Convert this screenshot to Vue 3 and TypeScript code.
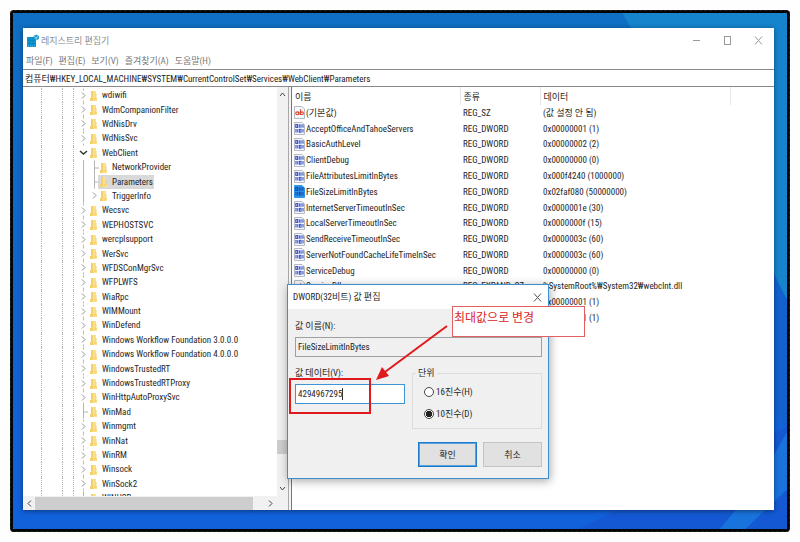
<script setup lang="ts">
import { ref } from 'vue'

interface TreeNode {
  name: string
  child?: boolean
  state: 'closed' | 'open' | 'leaf'
}

interface RegistryValue {
  name: string
  type: string
  data: string
  text?: boolean
}

const closed = (name: string): TreeNode => ({ name, state: 'closed' })

const menus: string[] = ['파일(F)', '편집(E)', '보기(V)', '즐겨찾기(A)', '도움말(H)']
const path = ref('컴퓨터₩HKEY_LOCAL_MACHINE₩SYSTEM₩CurrentControlSet₩Services₩WebClient₩Parameters')

const nodes: TreeNode[] = [
  ...['wdiwifi', 'WdmCompanionFilter', 'WdNisDrv', 'WdNisSvc'].map(closed),
  { name: 'WebClient', state: 'open' },
  { name: 'NetworkProvider', child: true, state: 'leaf' },
  { name: 'Parameters', child: true, state: 'leaf' },
  { name: 'TriggerInfo', child: true, state: 'closed' },
  ...[
    'Wecsvc', 'WEPHOSTSVC', 'wercplsupport', 'WerSvc', 'WFDSConMgrSvc', 'WFPLWFS', 'WiaRpc',
    'WIMMount', 'WinDefend', 'Windows Workflow Foundation 3.0.0.0',
    'Windows Workflow Foundation 4.0.0.0', 'WindowsTrustedRT', 'WindowsTrustedRTProxy',
    'WinHttpAutoProxySvc',
  ].map(closed),
  { name: 'WinMad', state: 'leaf' },
  ...['Winmgmt', 'WinNat', 'WinRM', 'Winsock', 'WinSock2'].map(closed),
  { name: 'WINUSB', state: 'leaf' },
]

const dword = (name: string, data: string): RegistryValue => ({ name, type: 'REG_DWORD', data })

const values: RegistryValue[] = [
  { name: '(기본값)', type: 'REG_SZ', data: '(값 설정 안 됨)', text: true },
  dword('AcceptOfficeAndTahoeServers', '0x00000001 (1)'),
  dword('BasicAuthLevel', '0x00000002 (2)'),
  dword('ClientDebug', '0x00000000 (0)'),
  dword('FileAttributesLimitInBytes', '0x000f4240 (1000000)'),
  dword('FileSizeLimitInBytes', '0x02faf080 (50000000)'),
  dword('InternetServerTimeoutInSec', '0x0000001e (30)'),
  dword('LocalServerTimeoutInSec', '0x0000000f (15)'),
  dword('SendReceiveTimeoutInSec', '0x0000003c (60)'),
  dword('ServerNotFoundCacheLifeTimeInSec', '0x0000003c (60)'),
  dword('ServiceDebug', '0x00000000 (0)'),
  { name: 'ServiceDll', type: 'REG_EXPAND_SZ', data: '%SystemRoot%₩System32₩webclnt.dll', text: true },
  { name: '', type: '', data: '0x00000001 (1)' },
  { name: '', type: '', data: '0x00000001 (1)' },
]

const selectedKey = ref('Parameters')
const selectedValue = ref('FileSizeLimitInBytes')
const valueData = ref('4294967295')
const base = ref('dec')
</script>

<template>
  <main class="desktop">
    <svg class="wallpaper" viewBox="0 0 780 522" preserveAspectRatio="none" aria-hidden="true">
      <defs>
        <linearGradient id="sky" x1="0" y1="0" x2="0" y2="1">
          <stop offset="0" stop-color="#0f6fc3" />
          <stop offset="0.5" stop-color="#1164cc" />
          <stop offset="1" stop-color="#1161dc" />
        </linearGradient>
      </defs>
      <rect width="780" height="522" fill="url(#sky)" />
      <path d="M614 0H780V290L700 130L624 18Z" fill="#1584cd" />
      <path d="M700 160L780 290V420L700 300Z" fill="#1261cf" />
      <path d="M570 522L780 418V522Z" fill="#1459d3" />
      <path d="M712 522L748 480L780 424V482L738 522Z" fill="#1873dc" />
    </svg>

    <section class="window">
      <header class="titlebar">
        <svg class="app-icon" viewBox="0 0 12 14" aria-hidden="true">
          <rect x="0" y="3" width="9" height="10" fill="#0b9ad8" />
          <path d="M0 6.2H9M0 9.6H9M3 3V13M6 3V13" stroke="#087cb4" stroke-width="0.7" />
          <path d="M1 12H8" stroke="#5cc4ec" stroke-width="0.8" stroke-dasharray="1 1" />
          <path d="M6.5 2L9.3 0.5L12 2V5L9.3 6.3L6.5 5Z" fill="#279fd0" />
          <path d="M7.5 2.6L9.3 3.6L11.2 2.6M9.3 3.6V5.6" fill="none" stroke="#c5eaf7" stroke-width="0.7" />
        </svg>
        <h1>레지스트리 편집기</h1>
        <div class="controls">
          <button type="button" aria-label="최소화">
            <svg viewBox="0 0 9 9"><path d="M1 4.5H8" /></svg>
          </button>
          <button type="button" aria-label="최대화">
            <svg viewBox="0 0 9 9"><rect x="1.5" y="0.5" width="6" height="8" /></svg>
          </button>
          <button type="button" aria-label="닫기">
            <svg viewBox="0 0 9 9"><path d="M1 0.5L8 8.5M8 0.5L1 8.5" /></svg>
          </button>
        </div>
      </header>

      <nav class="menubar">
        <button v-for="menu in menus" :key="menu" type="button">{{ menu }}</button>
      </nav>

      <input v-model="path" class="address" type="text" aria-label="주소" spellcheck="false" />

      <div class="panes">
        <div class="tree-pane">
          <div class="tree-view">
            <ul class="tree">
              <li v-for="node in nodes" :key="node.name" :class="[node.state, { child: node.child }]">
                <span class="guides"><i /><i /><i /></span>
                <svg v-if="node.child" class="trunk" viewBox="0 0 1 14" preserveAspectRatio="none">
                  <path d="M0.5 0V14" />
                </svg>
                <svg class="twist" viewBox="0 0 9 14" aria-hidden="true">
                  <path v-if="node.state === 'closed'" class="chevron" d="M3 4L6 7L3 10" />
                  <path v-else-if="node.state === 'open'" class="chevron dark" d="M1 5.5L4.5 8.5L8 5.5" />
                  <path v-else class="branch" d="M4.5 0V14M4.5 7.5H9" />
                  <path v-if="node.state === 'closed' && !node.child" class="dots" d="M4.5 0V2M4.5 12V14" />
                </svg>
                <span class="key" :class="{ selected: node.name === selectedKey }">
                  <svg class="folder" viewBox="0 0 7 11" aria-hidden="true">
                    <path d="M1 1H6V8H7V11H0V8H1Z" fill="#fbe08b" />
                    <path d="M1 1H3V11H0V8H1Z" fill="#f5d06a" />
                    <path d="M6 4V9H4" fill="none" stroke="#f2ca5f" stroke-width="0.8" />
                  </svg>
                  <span>{{ node.name }}</span>
                </span>
              </li>
            </ul>
            <div class="scroll vertical" aria-hidden="true">
              <svg viewBox="0 0 9 9"><path d="M2 6L4.5 3L7 6" /></svg>
              <span class="track"><b /></span>
              <svg viewBox="0 0 9 9"><path d="M2 3L4.5 6L7 3" /></svg>
            </div>
          </div>
          <div class="scroll horizontal" aria-hidden="true">
            <svg viewBox="0 0 9 9"><path d="M6 1.5L3 4.5L6 7.5" /></svg>
            <span class="track"><b /></span>
            <svg viewBox="0 0 9 9"><path d="M3 1.5L6 4.5L3 7.5" /></svg>
          </div>
        </div>

        <div class="list-pane">
          <table>
            <colgroup>
              <col class="col-name" />
              <col class="col-type" />
              <col class="col-data" />
              <col />
            </colgroup>
            <thead>
              <tr>
                <th scope="col">이름</th>
                <th scope="col">종류</th>
                <th scope="col">데이터</th>
                <td></td>
              </tr>
            </thead>
            <tbody>
              <tr v-for="(value, index) in values" :key="index">
                <td>
                  <span class="value-name" :class="{ picked: value.name === selectedValue }">
                    <svg class="value-icon" viewBox="0 0 11 13" aria-hidden="true">
                      <path class="sheet" d="M0.5 0.5H8L10.5 3V12.5H0.5Z" />
                      <g v-if="value.text" class="ab">
                        <circle cx="3.2" cy="7.3" r="1.4" />
                        <path d="M5 5.6V9M6.6 3.2V9" />
                        <circle cx="8" cy="7.3" r="1.4" />
                      </g>
                      <g v-else class="bits">
                        <rect x="1.8" y="2.6" width="1.8" height="2.8" />
                        <path d="M5.3 2.2V5.8M7 2.2V5.8M9 2.2V5.8M2 7V10.6M3.8 7V10.6" />
                        <rect x="5.6" y="7.4" width="1.4" height="2.8" />
                        <path d="M9 7V10.6" />
                      </g>
                    </svg>
                    {{ value.name }}
                  </span>
                </td>
                <td>{{ value.type }}</td>
                <td colspan="2">{{ value.data }}</td>
              </tr>
            </tbody>
          </table>
        </div>
      </div>

      <form class="dialog" role="dialog" aria-labelledby="dialog-title" @submit.prevent>
        <header>
          <h2 id="dialog-title">DWORD(32비트) 값 편집</h2>
          <button type="button" class="close" aria-label="닫기">
            <svg viewBox="0 0 9 9"><path d="M1 0.5L8 8.5M8 0.5L1 8.5" /></svg>
          </button>
        </header>
        <div class="dialog-body">
          <label for="value-name">값 이름(N):</label>
          <input id="value-name" class="field readonly" type="text" :value="selectedValue" readonly />
          <div class="columns">
            <div class="data-column">
              <label for="value-data">값 데이터(V):</label>
              <div class="edit-box">
                <input id="value-data" v-model="valueData" class="field" type="text" />
                <i class="caret" />
              </div>
            </div>
            <fieldset>
              <legend>단위</legend>
              <label><input v-model="base" type="radio" name="base" value="hex" />16진수(H)</label>
              <label><input v-model="base" type="radio" name="base" value="dec" />10진수(D)</label>
            </fieldset>
          </div>
          <div class="actions">
            <button type="submit" class="primary">확인</button>
            <button type="button">취소</button>
          </div>
        </div>

        <div class="highlight" />
        <svg class="arrow" viewBox="0 0 74 58" aria-hidden="true">
          <path d="M72 2L10 48" stroke="#e0191c" stroke-width="2" fill="none" />
          <path d="M1 56L7 43L14 52Z" fill="#e0191c" />
        </svg>
        <p class="note">최대값으로 변경</p>
      </form>
    </section>
  </main>
</template>

<style>
html,
body {
  background: #fefefe;
}
</style>

<style scoped>
* {
  box-sizing: border-box;
}

h1,
h2,
p,
ul {
  margin: 0;
  padding: 0;
  font-weight: 400;
}

button,
input {
  font: inherit;
  color: inherit;
  border: 0;
  padding: 0;
  margin: 0;
  background: none;
  border-radius: 0;
}

.desktop {
  position: relative;
  display: flex;
  height: calc(100vh - 20px);
  margin: 10px;
  padding: 15px 13px 19px 10px;
  border: 3px solid #050505;
  border-radius: 4px;
  outline: 1px dashed #222;
  outline-offset: -1px;
  overflow: hidden;
  color: #262626;
  font-family: 'Roboto Condensed', 'Noto Sans CJK KR', sans-serif;
  font-size: 9px;
  line-height: 14px;
}

.wallpaper {
  position: absolute;
  inset: 0;
  width: 100%;
  height: 100%;
}

.window {
  position: relative;
  flex: 1;
  min-width: 0;
  display: flex;
  flex-direction: column;
  background: #fff;
  box-shadow: 0 1px 5px rgba(0, 0, 0, 0.45);
}

.titlebar {
  display: flex;
  align-items: center;
  height: 25px;
  padding-left: 4px;
  gap: 2px;
}

.titlebar h1 {
  font-size: 9px;
  color: #8c8c8c;
}

.app-icon {
  width: 12px;
  height: 14px;
}

.controls {
  display: flex;
  margin-left: auto;
}

.controls button {
  display: grid;
  place-items: center;
  width: 31px;
  height: 24px;
}

.controls svg,
.close svg {
  width: 9px;
  height: 9px;
  fill: none;
  stroke: #9a9a9a;
}

.menubar {
  display: flex;
  gap: 6px;
  height: 16px;
  padding-left: 3px;
  color: #777;
}

.menubar button {
  line-height: 16px;
}

.address {
  width: 100%;
  height: 18px;
  padding: 0 2px;
  border-top: 1px solid #8a8a8a;
  border-bottom: 1px solid #8a8a8a;
  color: #1c1c1c;
}

.panes {
  flex: 1;
  min-height: 0;
  display: grid;
  grid-template-columns: 266px 1fr;
  column-gap: 2px;
  background: #f4f4f4;
}

.tree-pane {
  display: flex;
  flex-direction: column;
  min-height: 0;
  background: #fff;
  border-right: 1px solid #a8a8a8;
}

.tree-view {
  flex: 1;
  min-height: 0;
  display: flex;
}

.tree {
  flex: 1;
  display: grid;
  grid-template-rows: repeat(28, 1fr) 5px;
  padding-top: 1px;
  overflow: hidden;
  list-style: none;
}

.tree li {
  position: relative;
  display: flex;
  align-items: center;
  min-height: 0;
  padding-left: 56px;
}

.tree li:last-child {
  align-items: flex-start;
}

.tree li.child {
  padding-left: 60px;
}

.guides {
  position: absolute;
  inset: 0 auto 0 18px;
  display: flex;
}

.guides i {
  width: 21px;
  border-left: 1px dotted #b4b4b4;
}

.guides i + i {
  width: 11px;
}

.twist {
  width: 9px;
  height: 15px;
  flex: none;
  fill: none;
}

.child .twist {
  margin-left: 6px;
}

.trunk {
  width: 1px;
  height: 15px;
}

.trunk path,
.branch,
.dots {
  stroke: #b4b4b4;
}

.chevron {
  stroke: #929292;
}

.chevron.dark {
  stroke: #333;
  stroke-width: 1.4;
}

.key {
  display: flex;
  align-items: center;
  gap: 5px;
  height: 14px;
  padding: 0 1px 0 2px;
  white-space: nowrap;
}

.child .key {
  margin-left: -1px;
}

.key.selected {
  background: #d9d9d9;
}

.folder {
  width: 7px;
  height: 11px;
}

.scroll {
  display: flex;
  align-items: center;
  background: #f1f1f1;
}

.scroll svg {
  width: 9px;
  height: 9px;
  flex: none;
  fill: none;
  stroke: #444;
}

.scroll .track {
  flex: 1;
  display: flex;
  min-width: 0;
  min-height: 0;
}

.scroll b {
  background: #cdcdcd;
}

.scroll.vertical {
  flex-direction: column;
  width: 11px;
  padding: 3px 0;
}

.vertical .track {
  flex-direction: column;
  justify-content: flex-end;
  width: 100%;
  padding-bottom: 30px;
}

.vertical b {
  height: 14px;
}

.scroll.horizontal {
  height: 14px;
  padding: 0 13px 0 2px;
}

.horizontal .track {
  padding: 0 13px 0 1px;
  height: 13px;
}

.horizontal b {
  flex: 1;
}

.list-pane {
  min-width: 0;
  overflow: hidden;
  background: #fff;
  border-left: 1px solid #777;
}

table {
  width: 100%;
  height: 239px;
  table-layout: fixed;
  border-collapse: collapse;
}

.col-name {
  width: 168px;
}

.col-type {
  width: 80px;
}

.col-data {
  width: 190px;
}

th,
td {
  padding: 0 0 0 3px;
  text-align: left;
  font-weight: 400;
  white-space: nowrap;
}

th {
  height: 18px;
  padding-top: 2px;
  border-right: 1px solid #e6e6e6;
}

.value-name {
  display: flex;
  align-items: center;
  gap: 1px;
}

.value-icon {
  width: 11px;
  height: 13px;
  margin-left: -1px;
}

.sheet {
  fill: #f7f8fb;
  stroke: #b4b9c4;
}

.bits {
  fill: none;
  stroke: #3352c8;
  stroke-width: 1.1;
}

.ab {
  fill: none;
  stroke: #d8432f;
  stroke-width: 1.1;
}

.picked .sheet {
  fill: #2f93e6;
  stroke: #2f93e6;
}

.picked .bits {
  stroke: #0f4fb4;
}

.dialog {
  position: absolute;
  left: 264px;
  top: 256px;
  width: 262px;
  background: #f0f0f0;
  border: 1px solid #3d8fd0;
  box-shadow: 1px 2px 9px rgba(0, 0, 0, 0.35);
}

.dialog header {
  display: flex;
  align-items: center;
  justify-content: space-between;
  height: 24px;
  padding: 0 6px 0 5px;
  background: #fff;
}

.close {
  display: grid;
  place-items: center;
}

.close svg {
  stroke: #555;
}

.dialog h2 {
  font-size: 9px;
}

.dialog-body {
  padding: 10px 6px 11px 7px;
}

.dialog label {
  display: block;
}

.field {
  display: block;
  width: 100%;
  height: 20px;
  padding: 0 2px;
  background: #fff;
  border: 1px solid #3d95d8;
}

.field.readonly {
  margin-top: 4px;
  background: #f0f0f0;
  border-color: #a0a0a0;
}

.columns {
  display: grid;
  grid-template-columns: 110px 130px;
  justify-content: space-between;
  margin-top: 9px;
}

.data-column .field {
  margin-top: 4px;
}

.edit-box {
  position: relative;
}

.caret {
  position: absolute;
  left: 47px;
  top: 4px;
  width: 1px;
  height: 12px;
  background: #333;
}

fieldset {
  min-width: 0;
  height: 63px;
  margin: 0;
  padding: 1px 11px 0;
  border: 1px solid #dcdcdc;
}

legend {
  padding: 0 2px;
  margin-left: -8px;
}

.dialog fieldset label {
  display: flex;
  align-items: center;
  gap: 2px;
  height: 22px;
}

input[type='radio'] {
  appearance: none;
  width: 10px;
  height: 10px;
  border: 1px solid #444;
  border-radius: 50%;
  background: #fff;
}

input[type='radio']:checked {
  background: radial-gradient(circle, #222 0 3px, #fff 3px);
}

.actions {
  display: flex;
  justify-content: flex-end;
  gap: 6px;
  margin-top: 13px;
}

.actions button {
  width: 59px;
  height: 25px;
  background: #e1e1e1;
  border: 1px solid #c4c4c4;
}

.actions .primary {
  border: 1px solid #1c78c8;
  outline: 1px solid #5ba3dc;
  outline-offset: -2px;
}

.highlight {
  position: absolute;
  left: 1px;
  top: 93px;
  width: 82px;
  height: 36px;
  border: 2px solid #e0191c;
}

.arrow {
  position: absolute;
  left: 87px;
  top: 39px;
  width: 74px;
  height: 58px;
}

.note {
  position: absolute;
  left: 164px;
  top: 21px;
  width: 133px;
  height: 31px;
  padding: 2px 1px;
  border: 1px solid #e26060;
  background: #fff;
  color: #d9262a;
  font-size: 12px;
  line-height: 18px;
}
</style>
